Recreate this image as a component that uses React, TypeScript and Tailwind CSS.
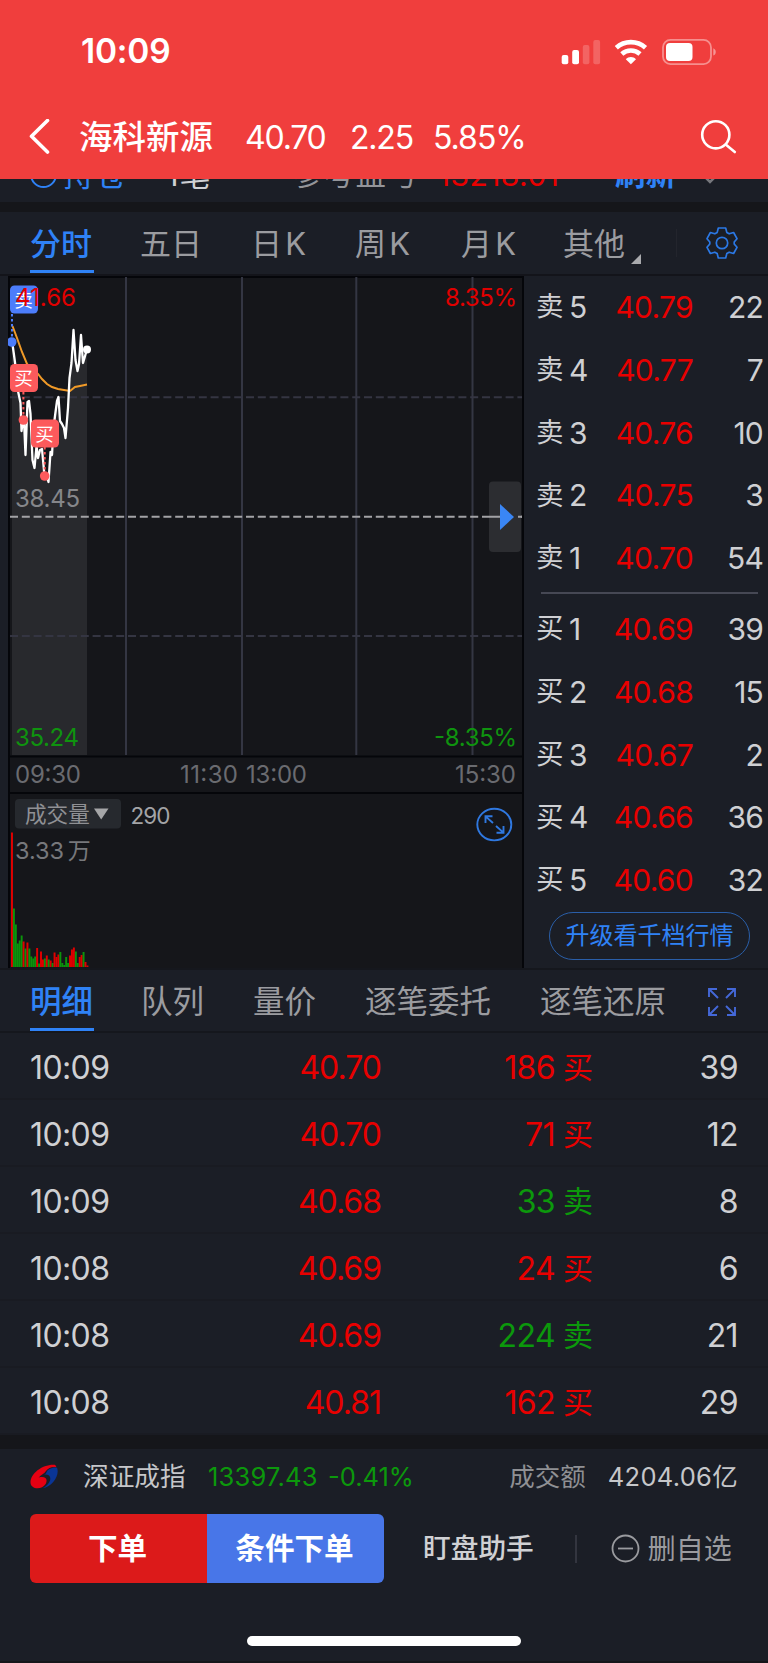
import clsx from "clsx";

type Side = "买" | "卖";

const periods = [
    { label: "五日", width: "w-[111px]" },
    { label: "日 K", width: "w-[104px]" },
    { label: "周 K", width: "w-[106px]" },
    { label: "月 K", width: "w-[102px]" },
];

const detailTabs = [
    { label: "队列", width: "w-[112px]" },
    { label: "量价", width: "w-[112px]" },
    { label: "逐笔委托", width: "w-[175px]" },
    { label: "逐笔还原", width: "w-[168px]" },
];

const asks = [
    { level: 5, price: "40.79", volume: 22 },
    { level: 4, price: "40.77", volume: 7 },
    { level: 3, price: "40.76", volume: 10 },
    { level: 2, price: "40.75", volume: 3 },
    { level: 1, price: "40.70", volume: 54 },
];

const bids = [
    { level: 1, price: "40.69", volume: 39 },
    { level: 2, price: "40.68", volume: 15 },
    { level: 3, price: "40.67", volume: 2 },
    { level: 4, price: "40.66", volume: 36 },
    { level: 5, price: "40.60", volume: 32 },
];

const trades: { time: string; price: string; volume: number; side: Side; count: number }[] = [
    { time: "10:09", price: "40.70", volume: 186, side: "买", count: 39 },
    { time: "10:09", price: "40.70", volume: 71, side: "买", count: 12 },
    { time: "10:09", price: "40.68", volume: 33, side: "卖", count: 8 },
    { time: "10:08", price: "40.69", volume: 24, side: "买", count: 6 },
    { time: "10:08", price: "40.69", volume: 224, side: "卖", count: 21 },
    { time: "10:08", price: "40.81", volume: 162, side: "买", count: 29 },
];

// one bar per minute since the open, r = up, g = down
const volumeBars: [string, number][] = [
    ["r", 134.5], ["g", 58.5], ["g", 42.5], ["g", 23.5], ["g", 26.5], ["g", 31.5], ["r", 25.5],
    ["g", 18.5], ["r", 24.5], ["g", 18.5], ["g", 10.5], ["g", 8.5], ["g", 10.5], ["r", 19], ["g", 3.5],
    ["r", 15.5], ["r", 7.5], ["g", 8.5], ["r", 11.5], ["g", 7.5], ["r", 6.5], ["g", 4], ["r", 14.5],
    ["r", 10], ["r", 12.5], ["g", 15], ["g", 4], ["g", 2], ["g", 10], ["g", 4], ["r", 11.5],
    ["r", 17.5], ["r", 19.5], ["g", 15.5], ["g", 4], ["r", 10], ["r", 12], ["g", 15], ["r", 5], ["r", 1.5],
];

const pricePoints =
    "12,341 14,355 16,370 18,391 20.5,403 21.5,431 22.5,424 24,420 25.5,455 27.5,402 29,401 30.5,414 32.5,460 34.5,468 36.5,446 38,458 40,450 42,449 44.5,476 46,474 48.5,482 50.5,452 52,455 53.5,428 55,416 57,401 58.5,397 60,421 62,424 64,428 65.5,438 68,408 69.5,378 71.5,363 73.5,330 75.5,360 77.5,371 79,364 81,335 83,363 84.5,358 87,349";

function StatusBar() {
    return (
        <div className="flex h-[96px] items-center pl-[81px] pr-[52px] pt-[7px]">
            <span className="pt-px text-[33.5px] leading-none font-semibold tracking-[-0.2px]">10:09</span>
            <svg className="ml-auto" width="155" height="26" viewBox="561 38 155 26" fill="none">
                <rect x="561.7" y="54" width="6.6" height="9.3" rx="2" fill="#fff" />
                <rect x="572.2" y="49" width="6.8" height="14.3" rx="2" fill="#fff" />
                <rect x="582.8" y="44" width="6.6" height="19.3" rx="2" fill="#fff" fillOpacity=".2" />
                <rect x="593.3" y="39" width="6.8" height="24.3" rx="2" fill="#fff" fillOpacity=".2" />
                <g stroke="#fff" strokeWidth="4.6">
                    <path d="M616.3 46.8C624.5 39.2 637.3 39.2 645.5 46.8" />
                    <path d="M621.8 53C627 48.3 634.8 48.3 640 53" />
                </g>
                <path d="M625.8 58.3C628.5 55.3 633.3 55.3 636 58.3L630.9 63.3Z" fill="#fff" />
                <rect x="663" y="38.9" width="48" height="24.2" rx="7.5" stroke="#fff" strokeOpacity=".42" strokeWidth="1.8" />
                <rect x="666" y="42" width="26.5" height="18" rx="4" fill="#fff" />
                <path d="M713.3 47.2C716.6 48.6 716.6 53.2 713.3 54.6Z" fill="#fff" fillOpacity=".45" />
            </svg>
        </div>
    );
}

function TitleBar() {
    return (
        <div className="flex h-[83px] items-center pl-[29px] pr-[30px] leading-none">
            <svg width="22" height="38" viewBox="29 118 22 38" fill="none" stroke="#fff" strokeWidth="3.6" strokeLinecap="round" strokeLinejoin="round">
                <path d="M47.5 119.5L31.5 135.2L47.5 151" />
            </svg>
            <h1 className="ml-[28px] w-[166px] text-[33.5px] font-medium">海科新源</h1>
            <span className="w-[105px] text-[32px] tracking-[-1.2px]">40.70</span>
            <span className="w-[83px] text-[32px] tracking-[-1.2px]">2.25</span>
            <span className="text-[32px] tracking-[-1px]">5.85%</span>
            <svg className="ml-auto" width="38" height="38" viewBox="700 118 38 38" fill="none" stroke="#fff" strokeWidth="2.6" strokeLinecap="round">
                <circle cx="715.8" cy="133.8" r="13.6" />
                <path d="M726 143.8L734.8 151" />
            </svg>
        </div>
    );
}

// sits half under the title bar once the page is scrolled
function HoldingRow() {
    return (
        <div className="h-[23px] overflow-hidden">
            <div className="-mt-[24.5px] flex h-10 items-center pl-[30px] text-[31px] leading-none">
                <span className="mr-[6px] h-[27px] w-[27px] rounded-full border-2 border-[#2f82f6]" />
                <span className="w-[103px] tracking-[1px] text-[#2f82f6]">持仓</span>
                <span className="w-[127px] tracking-[0.8px] text-[#cfd0d4]">1笔</span>
                <span className="w-[145px] text-[30.5px] tracking-[0.8px] text-[#94959a]">参考盈亏</span>
                <span className="w-[177px] text-[30px] tracking-[0.4px] text-[#e80000]">13218.01</span>
                <span className="text-[30.5px] font-bold text-[#2f82f6]">刷新</span>
                <svg className="mt-[10px] ml-[28px]" width="12" height="8" viewBox="0 0 12 8" fill="none" stroke="#77787d" strokeWidth="2.5">
                    <path d="M1 1L6 6L11 1" />
                </svg>
            </div>
        </div>
    );
}

function PeriodTabs() {
    return (
        <div className="flex h-[64px] items-center border-b-2 border-[#13141a] pl-[30px] text-[31px] leading-none text-[#9b9ca0]">
            <div className="relative flex h-full w-[110px] items-center font-medium text-[#2f82f6]">
                分时
                <i className="absolute bottom-px left-0 h-[3px] w-16 bg-[#2f82f6]" />
            </div>
            {periods.map((period) => (
                <span key={period.label} className={clsx("whitespace-nowrap [word-spacing:-5.5px]", period.width)}>
                    {period.label}
                </span>
            ))}
            <span>其他</span>
            <svg className="mt-[32px] ml-[6px]" width="10" height="10" viewBox="0 0 10 10" fill="#a9aaad">
                <path d="M10 0V10H0Z" />
            </svg>
            <i className="ml-[35px] h-7 w-px bg-[#23252d]" />
            <svg className="ml-[29px]" width="32" height="32" viewBox="0 0 32 32" fill="none" stroke="#2b78e4" strokeWidth="1.7" strokeLinejoin="round">
                <path d="M12.3 1H19.7L20.8 5.4L23.2 6.8L27.6 5.5L31 11.7L28.2 15V17L31 20.3L27.6 26.5L23.2 25.2L20.8 26.6L19.7 31H12.3L11.2 26.6L8.8 25.2L4.4 26.5L1 20.3L3.8 17V15L1 11.7L4.4 5.5L8.8 6.8L11.2 5.4Z" />
                <circle cx="16" cy="16" r="5.7" />
            </svg>
        </div>
    );
}

function Marker({ x, y, side }: { x: number; y: number; side: Side }) {
    return (
        <g>
            <rect x={x} y={y} width="28" height="28" rx="4.5" fill={side === "买" ? "#fc5a5c" : "#4c7dfb"} />
            <text x={x + 13.5} y={y + 21} fontSize="18.5" fill="#fff" textAnchor="middle">
                {side}
            </text>
        </g>
    );
}

function Chart() {
    return (
        <svg className="ml-2 shrink-0" width="516" height="692" viewBox="8 276 516 692" fontSize="24">
            <rect x="8" y="276" width="516" height="692" fill="#05060a" />
            <rect x="10" y="278" width="512" height="690" fill="#15161a" />
            <g fill="#05060a">
                <rect x="10" y="755.5" width="512" height="2" />
                <rect x="10" y="792" width="512" height="2" />
            </g>

            <polygon points={`12,755 ${pricePoints} 87,755`} fill="#28292d" />
            <path d="M126 277V755M242 277V755M356.3 277V755M472.5 277V755" stroke="#343643" strokeWidth="2" />
            <g strokeWidth="2" strokeDasharray="8 3.8">
                <path d="M10 397.3H522M10 636H522" stroke="#343542" />
                <path d="M10 516.8H522" stroke="#a3a3a6" />
            </g>

            <polyline
                points="12.5,326 17,338 22,352 27,364 32,369 38,374 42,379 47,384 52,387 58,389 64,390 70,391 75,387 80,386 87,384.5"
                fill="none"
                stroke="#f09a28"
                strokeWidth="2"
            />
            <polyline points={pricePoints} fill="none" stroke="#fff" strokeWidth="2.3" strokeLinejoin="round" />
            <circle cx="87" cy="349.5" r="4" fill="#fff" />

            <path d="M12 314V338" stroke="#4c7dfb" strokeWidth="2" strokeDasharray="2.5 2.5" />
            <circle cx="11.7" cy="342" r="4.8" fill="#4c7dfb" />
            <path d="M23.4 392V416M44.7 447V472" stroke="#fc5a5c" strokeWidth="2" strokeDasharray="2.5 2.5" />
            <circle cx="23.4" cy="420" r="4.8" fill="#fc5a5c" />
            <circle cx="44.7" cy="476" r="4.8" fill="#fc5a5c" />
            <Marker x={10} y={285.5} side="卖" />
            <Marker x={10} y={364} side="买" />
            <Marker x={31} y={419.5} side="买" />

            <g fill="#e00000">
                <text x="15" y="305.5" textLength="61">41.66</text>
                <text x="445" y="305.5" textLength="72">8.35%</text>
            </g>
            <text x="15" y="507" textLength="65" fill="#85868a">38.45</text>
            <g fill="#0f930f">
                <text x="15" y="746" textLength="64">35.24</text>
                <text x="434" y="746" textLength="83">-8.35%</text>
            </g>
            <g fill="#6a6b70">
                <text x="15" y="783" textLength="66">09:30</text>
                <text x="180" y="783" textLength="58">11:30</text>
                <text x="246" y="783" textLength="61">13:00</text>
                <text x="455" y="783" textLength="61">15:30</text>
            </g>

            <rect x="489" y="481.5" width="32" height="70.5" rx="4" fill="#2c2d31" />
            <path d="M489 516.8H500M518 516.8H522" stroke="#a3a3a6" strokeWidth="2" />
            <path d="M500 504L514 517L500 530Z" fill="#3a86f5" />

            <rect x="15" y="799" width="106" height="29.5" rx="4" fill="#26292e" />
            <text x="25" y="821.5" fontSize="21.6" fill="#8f9094">成交量</text>
            <path d="M94 808.5H108.5L101.2 819.5Z" fill="#a5a6a8" />
            <text x="130.5" y="824" fontSize="22.5" textLength="40" fill="#a3a4a7">290</text>
            <text x="15" y="859" fontSize="23.5" fill="#77787c" textLength="49">3.33</text>
            <text x="67.8" y="859" fontSize="23" fill="#77787c">万</text>

            <g fill="none" stroke="#2f78e0" strokeWidth="1.9">
                <ellipse cx="494.3" cy="824.6" rx="17" ry="15.8" />
                <path d="M485.5 823V816.3H492.5M485.8 816.6L493 823M503.5 826V832.7H496.5M503.2 832.4L496 826" />
            </g>

            {volumeBars.map(([color, height], i) => (
                <rect
                    key={i}
                    x={11 + i * 1.935}
                    y={967 - height}
                    width="1.95"
                    height={height}
                    fill={color === "r" ? "#e00000" : "#0c940c"}
                />
            ))}
        </svg>
    );
}

function QuoteRow({ side, level, price, volume }: { side: Side; level: number; price: string; volume: number }) {
    return (
        <div className="flex h-[62.8px] items-center pr-[5px] pl-3 text-[30px] leading-none tracking-[-0.5px] text-[#cfd0d3]">
            <span className="w-[33px] text-[27.5px]">{side}</span>
            <span className="w-5">{level}</span>
            <span className="w-[104px] text-right tracking-[-0.7px] text-[#e80000]">{price}</span>
            <span className="flex-1 text-right tracking-[-0.8px]">{volume}</span>
        </div>
    );
}

function OrderBook() {
    return (
        <div className="-mt-[0.4px] flex-1">
            {asks.map((ask) => (
                <QuoteRow key={ask.level} side="卖" {...ask} />
            ))}
            <div className="mt-[2.4px] mr-[10px] mb-[3.6px] ml-[17px] h-[2px] bg-[#464854]" />
            {bids.map((bid) => (
                <QuoteRow key={bid.level} side="买" {...bid} />
            ))}
            <button className="ml-[25px] flex h-[48px] w-[201px] items-center justify-center rounded-full border-[1.5px] border-[#2a5ea8] text-[24px] leading-none text-[#2f82f6]">
                升级看千档行情
            </button>
        </div>
    );
}

function DetailTabs() {
    return (
        <div className="flex h-[65px] items-center border-y-2 border-[#15171d] pt-[2px] pl-[30px] text-[31.5px] leading-none text-[#9b9ca0]">
            <div className="relative flex h-full w-[111px] items-center font-medium text-[#2f82f6]">
                明细
                <i className="absolute bottom-0 left-0 h-[3px] w-16 bg-[#2f82f6]" />
            </div>
            {detailTabs.map((tab) => (
                <span key={tab.label} className={clsx("whitespace-nowrap", tab.width)}>
                    {tab.label}
                </span>
            ))}
            <svg width="28" height="28" viewBox="0 0 28 28" fill="none" stroke="#4468d8" strokeWidth="1.9">
                <path d="M1 9V1H9M1 1L10 10M19 1H27V9M27 1L18 10M1 19V27H9M1 27L10 18M27 19V27H19M27 27L18 18" />
            </svg>
        </div>
    );
}

function TradeRow({ time, price, volume, side, count }: (typeof trades)[number]) {
    const color = side === "买" ? "text-[#e80000]" : "text-[#0c980c]";
    return (
        <div className="flex h-[67px] items-center border-b-2 border-[#191b22] px-[30px] pt-[4px] text-[32px] leading-none tracking-[-0.6px] text-[#cfd0d3]">
            <span className="w-[120px]">{time}</span>
            <span className="w-[231px] text-right tracking-[-1px] text-[#e80000]">{price}</span>
            <span className={clsx("w-[174px] text-right", color)}>{volume}</span>
            <span className={clsx("mb-[2px] ml-[8px] text-[30px]", color)}>{side}</span>
            <span className="flex-1 text-right">{count}</span>
        </div>
    );
}

function IndexBar() {
    return (
        <div className="flex h-[57px] items-center pr-[30px] pb-[2px] pl-[30px] text-[25.5px] leading-none text-[#c6c7ca]">
            <svg width="28" height="25" viewBox="88 309 84 76">
                <path fill="#e60012" d="M162 311C125 309 88 338 89 366C90 387 124 388 135 370C143 354 134 345 114 350C120 342 132 338 136 330C144 320 156 316 168 319C167 315 165 312 162 311Z" />
                <path fill="#0a3595" d="M170 321C178 345 155 378 126 383C145 371 152 358 148 348C144 341 138 340 128 342C142 338 134 330 146 325C154 320 164 318 170 321Z" />
            </svg>
            <span className="ml-[25px] w-[125px] text-[25.7px]">深证成指</span>
            <span className="w-[120px] tracking-[0.2px] text-[#0c980c]">13397.43</span>
            <span className="text-[#0c980c]">-0.41%</span>
            <span className="ml-auto text-[#8f9094]">成交额</span>
            <span className="ml-[22px] tracking-[0.3px]">4204.06亿</span>
        </div>
    );
}

function ActionBar() {
    return (
        <div className="mt-[8px] flex h-[69px] items-center pl-[30px] leading-none">
            <div className="flex h-full overflow-hidden rounded-[6px] text-[29.6px] font-bold text-white">
                <button className="w-[177px] bg-[#dc1a1a] pt-px pr-[2px]">下单</button>
                <button className="w-[177px] bg-[#4876e8] pt-px pr-[2px]">条件下单</button>
            </div>
            <span className="ml-[39px] text-[27.7px] font-medium text-[#d0d1d4]">盯盘助手</span>
            <i className="ml-[41px] h-7 w-[2px] bg-[#33353f]" />
            <svg className="ml-[34px]" width="29" height="29" viewBox="0 0 29 29" fill="none" stroke="#9a9b9f" strokeWidth="1.8">
                <circle cx="14.5" cy="14.5" r="13" />
                <path d="M7 14.5H22" />
            </svg>
            <span className="ml-[8px] text-[28px] text-[#9a9b9f]">删自选</span>
        </div>
    );
}

export default function App() {
    return (
        <div className="flex h-[1663px] w-[768px] flex-col overflow-hidden bg-[#1b1e26] font-[Inter,'Noto_Sans_CJK_SC',sans-serif]">
            <header className="h-[179px] shrink-0 bg-[#f03e3d] text-white">
                <StatusBar />
                <TitleBar />
            </header>
            <HoldingRow />
            <div className="h-[10px] bg-[#15161a]" />
            <PeriodTabs />
            <div className="flex h-[692px]">
                <Chart />
                <OrderBook />
            </div>
            <DetailTabs />
            <div className="h-[402px]">
                {trades.map((trade, i) => (
                    <TradeRow key={i} {...trade} />
                ))}
            </div>
            <div className="h-[14px] bg-[#15161a]" />
            <IndexBar />
            <ActionBar />
            <div className="mx-auto mt-[53px] h-[10px] w-[274px] rounded-full bg-white" />
            <div className="mt-auto h-[2px] bg-[#15161a]" />
        </div>
    );
}
